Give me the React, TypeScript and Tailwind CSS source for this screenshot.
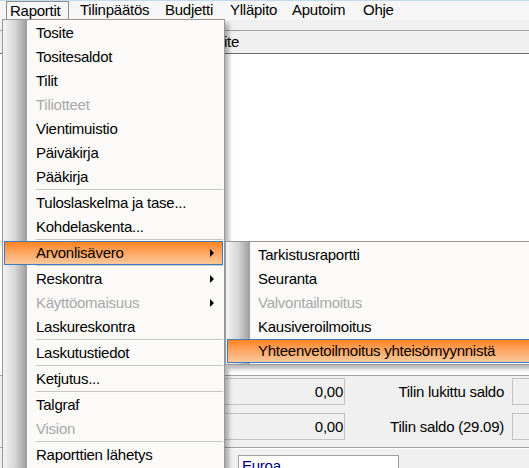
import React from 'react'

type Row = { label: string; disabled?: boolean; sub?: boolean; active?: boolean } | 'sep'

const mainItems: Row[] = [
  { label: 'Tosite' },
  { label: 'Tositesaldot' },
  { label: 'Tilit' },
  { label: 'Tiliotteet', disabled: true },
  { label: 'Vientimuistio' },
  { label: 'Päiväkirja' },
  { label: 'Pääkirja' },
  'sep',
  { label: 'Tuloslaskelma ja tase...' },
  { label: 'Kohdelaskenta...' },
  'sep',
  { label: 'Arvonlisävero', sub: true, active: true },
  'sep',
  { label: 'Reskontra', sub: true },
  { label: 'Käyttöomaisuus', sub: true, disabled: true },
  { label: 'Laskureskontra' },
  'sep',
  { label: 'Laskutustiedot' },
  'sep',
  { label: 'Ketjutus...' },
  'sep',
  { label: 'Talgraf' },
  { label: 'Vision', disabled: true },
  'sep',
  { label: 'Raporttien lähetys' },
]

const vatItems: Row[] = [
  { label: 'Tarkistusraportti' },
  { label: 'Seuranta' },
  { label: 'Valvontailmoitus', disabled: true },
  { label: 'Kausiveroilmoitus' },
  { label: 'Yhteenvetoilmoitus yhteisömyynnistä', active: true },
]

const topMenu = [
  { label: 'Tilinpäätös', w: 'w-[85px]' },
  { label: 'Budjetti', w: 'w-[65px]' },
  { label: 'Ylläpito', w: 'w-[62px]' },
  { label: 'Aputoim', w: 'w-[71px]' },
  { label: 'Ohje', w: 'w-[60px]' },
]

function Arrow() {
  return (
    <svg width="5" height="8" viewBox="0 0 5 8" className="ml-auto mr-[7px]">
      <path d="M0 0L4 4L0 8Z" fill="#000" />
    </svg>
  )
}

function MenuRows({ rows, pad }: { rows: Row[]; pad: string }) {
  return (
    <>
      {rows.map((r, i) =>
        r === 'sep' ? (
          <div key={i} className="relative ml-[32px] h-[2px] border-t border-[#c5c5c5] bg-white" />
        ) : (
          <div
            key={i}
            className={`relative flex h-[24px] items-center border ${pad} ${
              r.active
                ? 'border-[#3d7bc4] bg-linear-to-b from-[#ff8410] to-[#f9c89a]'
                : 'border-transparent'
            } ${r.disabled ? 'text-[#a8a8a8]' : 'text-black'}`}
          >
            <span className="whitespace-nowrap">{r.label}</span>
            {r.sub && <Arrow />}
          </div>
        ),
      )}
    </>
  )
}

export default function App() {
  return (
    <div className="relative h-[468px] w-[529px] overflow-hidden bg-[#f0f0f0] font-['Liberation_Sans',Arial,sans-serif] text-[15px] tracking-[-0.25px] text-black">
      {/* window frame line */}
      <div className="h-px bg-[#c4d8ee]" />

      {/* menubar */}
      <div className="flex h-[19px] bg-[#f6f6f6] pl-[6px] leading-[18px]">
        <div className="w-[70px]">
          <div className="h-[20px] w-[63px] border border-b-0 border-[#8c8c8c] pl-[3px]">Raportit</div>
        </div>
        {topMenu.map(m => (
          <div key={m.label} className={`${m.w} pl-[4px]`}>
            {m.label}
          </div>
        ))}
      </div>

      {/* toolbar band */}
      <div className="h-[11px] border-b border-[#a0a0a0]" />

      {/* column header */}
      <div className="h-[23px] border-b border-[#6b6b6b] pl-[203px] leading-[22px]">Selite</div>

      {/* grid area */}
      <div className="h-[321px] bg-white" />

      {/* balance panel */}
      <div className="flex h-[73px] flex-col gap-[8px] border-y border-[#a0a0a0] pt-[2px]">
        {[
          { v: '0,00', l: 'Tilin lukittu saldo' },
          { v: '0,00', l: 'Tilin saldo (29.09)' },
        ].map(r => (
          <div key={r.l} className="grid h-[27px] grid-cols-[345px_167px_1fr]">
            <div className="ml-auto h-full w-[200px] border border-[#c2c2c2] pr-[1px] text-right leading-[25px]">
              {r.v}
            </div>
            <div className="pr-[8px] text-right leading-[27px]">{r.l}</div>
            <div className="h-full w-[40px] border border-[#c2c2c2]" />
          </div>
        ))}
      </div>

      {/* currency row */}
      <div className="border-t border-white pl-[238px] pt-[6px]">
        <div className="h-[22px] w-[161px] border border-[#a0a0a0] bg-white pl-[3px] leading-[20px] text-[#00007f]">
          Euroa
        </div>
      </div>

      {/* Raportit dropdown */}
      <div className="absolute left-[2px] top-[19px] w-[223px] border border-[#979797] bg-[#fbfaf8] p-[1px] shadow-[4px_4px_4px_rgba(0,0,0,0.28)]">
        <div className="absolute inset-y-0 left-0 w-[24px] bg-linear-to-r from-[#f4f4f4] via-[#d6d6d6] to-[#9c9c9c]" />
        <MenuRows rows={mainItems} pad="pl-[31px]" />
      </div>

      {/* Arvonlisävero submenu */}
      <div className="absolute left-[225px] top-[241px] w-[330px] border border-[#979797] bg-[#fbfaf8] p-[1px] shadow-[4px_4px_4px_rgba(0,0,0,0.28)]">
        <div className="absolute inset-y-0 left-0 w-[24px] bg-linear-to-r from-[#f4f4f4] via-[#d6d6d6] to-[#9c9c9c]" />
        <MenuRows rows={vatItems} pad="pl-[30px]" />
      </div>
    </div>
  )
}
